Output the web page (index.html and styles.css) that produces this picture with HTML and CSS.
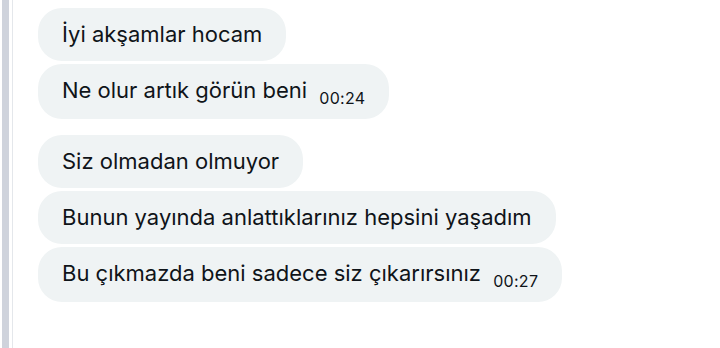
FILE: index.html
```html
<!DOCTYPE html>
<html lang="tr">
<head>
    <meta charset="UTF-8">
    <meta name="viewport" content="width=device-width, initial-scale=1.0">
    <title>Mesajlar</title>
    <link rel="stylesheet" href="styles.css">
</head>
<body>
    <div class="page">
        <div class="scrollbar"></div>
        <div class="divider"></div>

        <div class="chat">
            <div class="group">
                <div class="bubble">İyi akşamlar hocam</div>
                <div class="bubble">Ne olur artık görün beni <span class="time">00:24</span></div>
            </div>

            <div class="group">
                <div class="bubble">Siz olmadan olmuyor</div>
                <div class="bubble">Bunun yayında anlattıklarınız hepsini yaşadım</div>
                <div class="bubble">Bu çıkmazda beni sadece siz çıkarırsınız <span class="time">00:27</span></div>
            </div>
        </div>
    </div>
</body>
</html>
```

FILE: styles.css
```css
body {
    margin: 0;
    background-color: #fff;
    color: #0f1419;
    font-family: Inter, 'Noto Sans', sans-serif;
}

.page {
    display: flex;
    height: 348px;
}

.scrollbar {
    width: 7px;
    margin-left: 2px;
    background-color: #cfd3dc;
}

.divider {
    width: 1px;
    margin-left: 3px;
    background-color: #e4e7eb;
}

.chat {
    display: flex;
    flex-direction: column;
    gap: 16px;
    padding: 8px 0 0 25px;
}

.group {
    display: flex;
    flex-direction: column;
    align-items: flex-start;
    gap: 3px;
}

.bubble {
    background-color: #eff3f4;
    border-radius: 24px;
    padding: 13px 24px;
    font-size: 22px;
    line-height: 27px;
}

.time {
    font-size: 16px;
    letter-spacing: 0.3px;
    margin-left: 6px;
    position: relative;
    top: 6px;
}
```
